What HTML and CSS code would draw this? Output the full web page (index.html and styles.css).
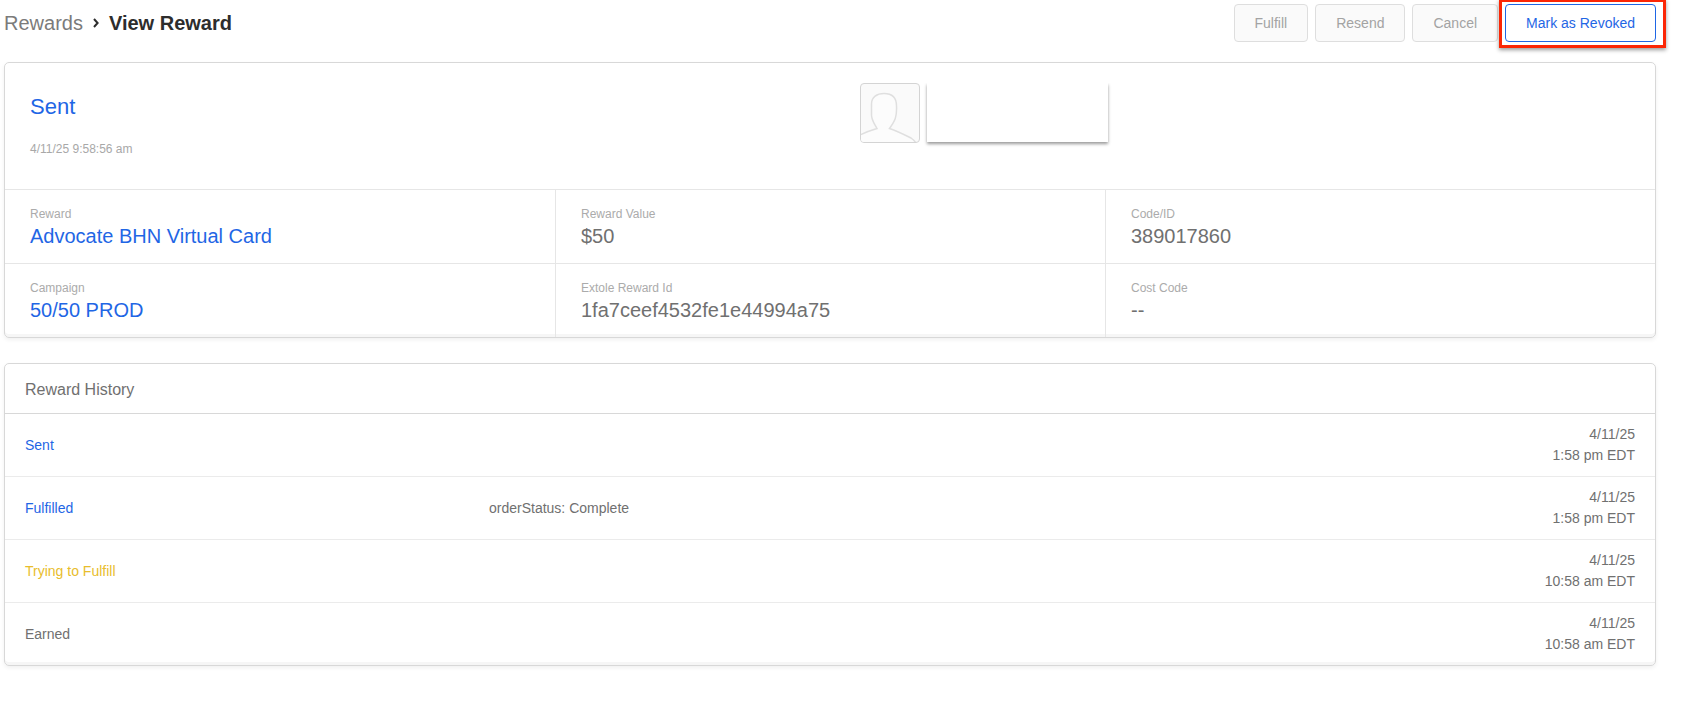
FILE: index.html
```html
<!DOCTYPE html>
<html lang="en">
<head>
<meta charset="utf-8">
<title>View Reward</title>
<link rel="stylesheet" href="styles.css">
</head>
<body>
<main class="page">
  <header class="topbar">
    <nav class="crumbs" aria-label="Breadcrumb">
      <a class="crumb-link" href="#">Rewards</a>
      <svg class="chevron" viewBox="0 0 6 10" aria-hidden="true"><path d="M1 1l3.6 4L1 9"/></svg>
      <h1 class="crumb-current">View Reward</h1>
    </nav>
    <div class="actions">
      <button class="btn" type="button" disabled>Fulfill</button>
      <button class="btn" type="button" disabled>Resend</button>
      <button class="btn" type="button" disabled>Cancel</button>
      <div class="highlight"><button class="btn btn-primary" type="button">Mark as Revoked</button></div>
    </div>
  </header>

  <section class="card">
    <div class="summary">
      <div class="status">
        <h2 class="status-name">Sent</h2>
        <p class="status-date">4/11/25 9:58:56 am</p>
      </div>
      <div class="person">
        <svg class="avatar" viewBox="0 0 58 58" aria-hidden="true"><path class="avatar-body" d="M-1 51C5 48 11 46 16 44.500C13 39 10.500 36 10.500 31V20C10.500 13 16 9.500 23 9.500S35.500 13 35.500 22C36 33 34 37 28.500 44.500C36 47 44 51 50 54Q53 56 55 59H-1Z"/></svg>
        <div class="person-name"></div>
      </div>
    </div>
    <dl class="facts">
      <div class="fact"><dt class="fact-label">Reward</dt><dd class="fact-value"><a class="link" href="#">Advocate BHN Virtual Card</a></dd></div>
      <div class="fact"><dt class="fact-label">Reward Value</dt><dd class="fact-value">$50</dd></div>
      <div class="fact"><dt class="fact-label">Code/ID</dt><dd class="fact-value">389017860</dd></div>
      <div class="fact"><dt class="fact-label">Campaign</dt><dd class="fact-value"><a class="link" href="#">50/50 PROD</a></dd></div>
      <div class="fact"><dt class="fact-label">Extole Reward Id</dt><dd class="fact-value">1fa7ceef4532fe1e44994a75</dd></div>
      <div class="fact"><dt class="fact-label">Cost Code</dt><dd class="fact-value">--</dd></div>
    </dl>
  </section>

  <section class="card">
    <h2 class="card-title" id="history-title">Reward History</h2>
    <table class="history" aria-labelledby="history-title">
      <tbody>
        <tr><td class="state is-done">Sent</td><td class="note"></td><td class="when">4/11/25<br>1:58 pm EDT</td></tr>
        <tr><td class="state is-done">Fulfilled</td><td class="note">orderStatus: Complete</td><td class="when">4/11/25<br>1:58 pm EDT</td></tr>
        <tr><td class="state is-pending">Trying to Fulfill</td><td class="note"></td><td class="when">4/11/25<br>10:58 am EDT</td></tr>
        <tr><td class="state">Earned</td><td class="note"></td><td class="when">4/11/25<br>10:58 am EDT</td></tr>
      </tbody>
    </table>
  </section>
</main>
</body>
</html>
```

FILE: styles.css
```css
* {
  box-sizing: border-box;
}

body {
  margin: 0;
  background: #fff;
  color: #707070;
  font: 14px/21px "Helvetica Neue", "Liberation Sans", Arial, sans-serif;
}

h1, h2, p, dl, dd {
  margin: 0;
  font-weight: normal;
}

.page {
  padding: 4px 26px 8px 4px;
}

.topbar {
  display: flex;
  justify-content: space-between;
  align-items: flex-start;
  margin-bottom: 20px;
}

.crumbs {
  display: flex;
  align-items: center;
  gap: 10px;
  height: 38px;
  font-size: 20px;
}

.crumb-link {
  color: #7b7b7b;
  text-decoration: none;
}

.crumb-current {
  color: #2d2d2d;
  font-size: 20px;
  font-weight: bold;
}

.chevron {
  width: 6px;
  height: 10px;
  fill: none;
  stroke: #2d2d2d;
  stroke-width: 2;
}

.actions {
  display: flex;
  gap: 7px;
}

.btn {
  height: 38px;
  padding: 0 20px;
  border: 1px solid #dedede;
  border-radius: 4px;
  background: #fafafa;
  color: #a3a3a3;
  font: inherit;
}

.btn-primary {
  border-color: #1f66e5;
  background: #fff;
  color: #1f66e5;
}

.highlight {
  position: relative;
}

.highlight::after {
  content: "";
  position: absolute;
  inset: -5px -10px -6px -6px;
  border: 3px solid #fb2605;
  box-shadow: 0 2px 4px rgba(0, 0, 0, 0.4);
  pointer-events: none;
}

.card {
  margin-bottom: 25px;
  border: 1px solid #d8d8d8;
  border-radius: 5px;
  box-shadow: 0 2px 4px rgba(0, 0, 0, 0.06), inset 0 -3px #f6f6f6;
}

.summary {
  display: grid;
  grid-template-columns: 1fr 1fr;
  padding: 20px 25px 32px;
}

.status {
  padding-top: 10px;
}

.status-name {
  color: #1f66e5;
  font-size: 22px;
  line-height: 28px;
}

.status-date {
  margin-top: 20px;
  color: #a8a8a8;
  font-size: 12px;
  line-height: 16px;
}

.person {
  display: flex;
  gap: 7px;
  padding-left: 30px;
}

.avatar {
  width: 60px;
  height: 60px;
  border: 1px solid #d4d4d4;
  border-radius: 4px;
  background: #fafafa;
}

.avatar-body {
  fill: #fcfcfc;
  stroke: #dfdfdf;
  stroke-width: 1.5;
}

.person-name {
  width: 181px;
  height: 59px;
  background: #fff;
  box-shadow: 0 2px 3px rgba(0, 0, 0, 0.4);
  clip-path: inset(0 -4px -8px -4px);
}

.facts {
  display: grid;
  grid-template-columns: repeat(3, 1fr);
}

.fact {
  padding: 16px 25px 13px;
  border-top: 1px solid #e6e6e6;
}

.fact:not(:nth-child(3n + 1)) {
  border-left: 1px solid #e6e6e6;
}

.fact-label {
  color: #ababab;
  font-size: 12px;
  line-height: 16px;
}

.fact-value {
  font-size: 20px;
  line-height: 28px;
}

.link {
  color: #1f66e5;
  text-decoration: none;
}

.card-title {
  padding: 15px 20px 13px;
  border-bottom: 1px solid #d8d8d8;
  font-size: 16px;
  line-height: 21px;
}

.history {
  width: 100%;
  border-collapse: separate;
  border-spacing: 0;
  table-layout: fixed;
}

.history td {
  padding: 10px 20px;
  border-bottom: 1px solid #ebebeb;
}

.history tr:last-child td {
  border-bottom: 0;
}

.history .note {
  padding-left: 22px;
}

.state {
  width: 28%;
}

.when {
  text-align: right;
}

.is-done {
  color: #1f66e5;
}

.is-pending {
  color: #e8bd2c;
}
```
